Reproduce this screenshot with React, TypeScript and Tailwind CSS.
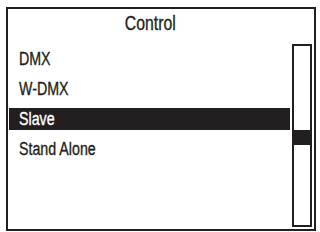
const items = ["DMX", "W-DMX", "Slave", "Stand Alone"];
const selected = 2;

export default function App() {
  return (
    <div className="w-[320px] h-[232px] bg-white pl-[6px] pt-[7px] font-['Liberation_Sans',Arial,sans-serif] text-[#231f20] [-webkit-text-stroke:0.35px_currentColor]">
      <div className="w-[310px] h-[224px] border-2 border-[#231f20] flex flex-col">
        <div className="w-[284px] mt-[3px] h-[23px] text-center text-[20px] leading-[22px]">
          <span className="inline-block scale-x-[0.79]">Control</span>
        </div>
        <div className="mt-[9px] flex-1 flex">
          <div className="ml-[1px] w-[281px] pt-[4px] flex flex-col gap-[8px]">
            {items.map((item, i) => (
              <div
                key={item}
                className={
                  i === selected
                    ? "h-[22px] pl-[10px] text-[18px] leading-[22px] bg-[#231f20] text-white"
                    : "h-[22px] pl-[10px] text-[18px] leading-[22px]"
                }
              >
                <span className="inline-block origin-left scale-x-[0.79]">{item}</span>
              </div>
            ))}
          </div>
          <div className="ml-[2px] w-[20px] mr-[2px] mb-[2px] border-2 border-[#231f20]">
            <div className="mt-[84px] h-[15px] bg-[#231f20]" />
          </div>
        </div>
      </div>
    </div>
  );
}
